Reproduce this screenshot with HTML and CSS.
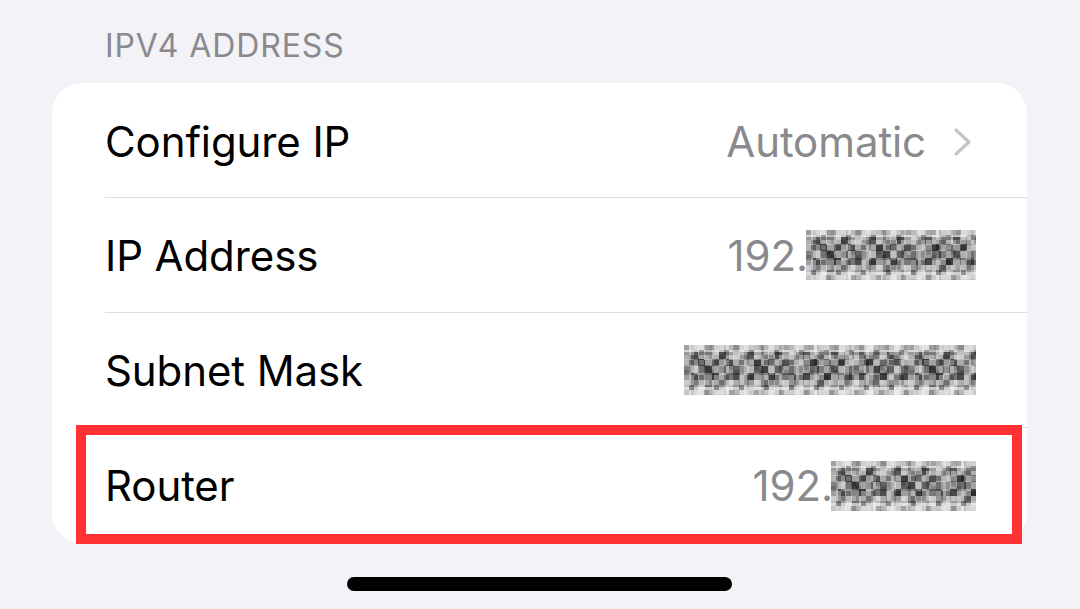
FILE: index.html
```html
<!DOCTYPE html>
<html lang="en">
<head>
<meta charset="utf-8">
<title>IPv4 Address</title>
<link rel="stylesheet" href="styles.css">
</head>
<body>
<svg class="defs" width="0" height="0" aria-hidden="true">
  <defs>
    <pattern id="mosaic" x="0" y="0" width="56" height="49" patternUnits="userSpaceOnUse">
      <rect x="0" y="0" width="56" height="49" fill="#bdbdbd"/>
      <rect x="0" y="0" width="7" height="7" fill="#d6d6d6"/>
      <rect x="7" y="0" width="7" height="7" fill="#c8c8c8"/>
      <rect x="14" y="0" width="7" height="7" fill="#e0e0e0"/>
      <rect x="21" y="0" width="7" height="7" fill="#b8b8b8"/>
      <rect x="28" y="0" width="7" height="7" fill="#d2d2d2"/>
      <rect x="35" y="0" width="7" height="7" fill="#c4c4c4"/>
      <rect x="42" y="0" width="7" height="7" fill="#dadada"/>
      <rect x="49" y="0" width="7" height="7" fill="#bababa"/>
      <rect x="0" y="7" width="7" height="7" fill="#9a9a9a"/>
      <rect x="7" y="7" width="7" height="7" fill="#5a5a5a"/>
      <rect x="14" y="7" width="7" height="7" fill="#a6a6a6"/>
      <rect x="21" y="7" width="7" height="7" fill="#7a7a7a"/>
      <rect x="28" y="7" width="7" height="7" fill="#b0b0b0"/>
      <rect x="35" y="7" width="7" height="7" fill="#4e4e4e"/>
      <rect x="42" y="7" width="7" height="7" fill="#9c9c9c"/>
      <rect x="49" y="7" width="7" height="7" fill="#c2c2c2"/>
      <rect x="0" y="14" width="7" height="7" fill="#b4b4b4"/>
      <rect x="7" y="14" width="7" height="7" fill="#8a8a8a"/>
      <rect x="14" y="14" width="7" height="7" fill="#3c3c3c"/>
      <rect x="21" y="14" width="7" height="7" fill="#a2a2a2"/>
      <rect x="28" y="14" width="7" height="7" fill="#6a6a6a"/>
      <rect x="35" y="14" width="7" height="7" fill="#989898"/>
      <rect x="42" y="14" width="7" height="7" fill="#505050"/>
      <rect x="49" y="14" width="7" height="7" fill="#ababab"/>
      <rect x="0" y="21" width="7" height="7" fill="#8e8e8e"/>
      <rect x="7" y="21" width="7" height="7" fill="#b6b6b6"/>
      <rect x="14" y="21" width="7" height="7" fill="#727272"/>
      <rect x="21" y="21" width="7" height="7" fill="#444444"/>
      <rect x="28" y="21" width="7" height="7" fill="#a4a4a4"/>
      <rect x="35" y="21" width="7" height="7" fill="#626262"/>
      <rect x="42" y="21" width="7" height="7" fill="#b2b2b2"/>
      <rect x="49" y="21" width="7" height="7" fill="#6e6e6e"/>
      <rect x="0" y="28" width="7" height="7" fill="#a0a0a0"/>
      <rect x="7" y="28" width="7" height="7" fill="#4a4a4a"/>
      <rect x="14" y="28" width="7" height="7" fill="#9e9e9e"/>
      <rect x="21" y="28" width="7" height="7" fill="#868686"/>
      <rect x="28" y="28" width="7" height="7" fill="#3e3e3e"/>
      <rect x="35" y="28" width="7" height="7" fill="#a8a8a8"/>
      <rect x="42" y="28" width="7" height="7" fill="#787878"/>
      <rect x="49" y="28" width="7" height="7" fill="#4c4c4c"/>
      <rect x="0" y="35" width="7" height="7" fill="#c0c0c0"/>
      <rect x="7" y="35" width="7" height="7" fill="#9a9a9a"/>
      <rect x="14" y="35" width="7" height="7" fill="#b8b8b8"/>
      <rect x="21" y="35" width="7" height="7" fill="#6c6c6c"/>
      <rect x="28" y="35" width="7" height="7" fill="#acacac"/>
      <rect x="35" y="35" width="7" height="7" fill="#8c8c8c"/>
      <rect x="42" y="35" width="7" height="7" fill="#bcbcbc"/>
      <rect x="49" y="35" width="7" height="7" fill="#969696"/>
      <rect x="0" y="42" width="7" height="7" fill="#dcdcdc"/>
      <rect x="7" y="42" width="7" height="7" fill="#cacaca"/>
      <rect x="14" y="42" width="7" height="7" fill="#e2e2e2"/>
      <rect x="21" y="42" width="7" height="7" fill="#c6c6c6"/>
      <rect x="28" y="42" width="7" height="7" fill="#d8d8d8"/>
      <rect x="35" y="42" width="7" height="7" fill="#cecece"/>
      <rect x="42" y="42" width="7" height="7" fill="#e4e4e4"/>
      <rect x="49" y="42" width="7" height="7" fill="#cccccc"/>
    </pattern>
    <pattern id="grain" x="0" y="0" width="25" height="25" patternUnits="userSpaceOnUse">
      <rect x="0" y="0" width="5" height="5" fill="#000" fill-opacity="0.25"/>
      <rect x="10" y="0" width="5" height="5" fill="#fff" fill-opacity="0.3"/>
      <rect x="20" y="0" width="5" height="5" fill="#000" fill-opacity="0.15"/>
      <rect x="5" y="5" width="5" height="5" fill="#fff" fill-opacity="0.35"/>
      <rect x="15" y="5" width="5" height="5" fill="#000" fill-opacity="0.3"/>
      <rect x="0" y="10" width="5" height="5" fill="#fff" fill-opacity="0.2"/>
      <rect x="10" y="10" width="5" height="5" fill="#000" fill-opacity="0.2"/>
      <rect x="20" y="10" width="5" height="5" fill="#fff" fill-opacity="0.4"/>
      <rect x="5" y="15" width="5" height="5" fill="#000" fill-opacity="0.35"/>
      <rect x="15" y="15" width="5" height="5" fill="#fff" fill-opacity="0.25"/>
      <rect x="0" y="20" width="5" height="5" fill="#000" fill-opacity="0.1"/>
      <rect x="10" y="20" width="5" height="5" fill="#fff" fill-opacity="0.3"/>
      <rect x="20" y="20" width="5" height="5" fill="#000" fill-opacity="0.28"/>
    </pattern>
  </defs>
</svg>

<main class="screen">
  <h2 class="section-header">IPV4 ADDRESS</h2>
  <section class="card">
    <div class="row">
      <span class="label">Configure IP</span>
      <span class="value">Automatic
        <svg class="chevron" width="19" height="30" viewBox="0 0 19 30" aria-hidden="true"><polyline points="3,3 16,15 3,27" fill="none" stroke="#c4c4c7" stroke-width="3.2" stroke-linecap="round" stroke-linejoin="round"/></svg>
      </span>
    </div>
    <div class="row">
      <span class="label">IP Address</span>
      <span class="value">192.<svg class="mosaic" width="170" height="50" aria-hidden="true"><rect width="170" height="50" fill="url(#mosaic)"/><rect width="170" height="50" fill="url(#grain)"/></svg></span>
    </div>
    <div class="row">
      <span class="label">Subnet Mask</span>
      <span class="value"><svg class="mosaic" width="292" height="50" aria-hidden="true"><rect width="292" height="50" fill="url(#mosaic)"/><rect width="292" height="50" fill="url(#grain)"/></svg></span>
    </div>
    <div class="row last">
      <span class="label">Router</span>
      <span class="value">192.<svg class="mosaic" width="145" height="50" aria-hidden="true"><rect width="145" height="50" fill="url(#mosaic)"/><rect width="145" height="50" fill="url(#grain)"/></svg></span>
    </div>
    <div class="highlight"></div>
  </section>
  <div class="home-indicator"></div>
</main>
</body>
</html>
```

FILE: styles.css
```css
* { box-sizing: border-box; }

html, body {
  margin: 0;
  padding: 0;
  background: #f2f2f7;
  width: 1080px;
  height: 609px;
  overflow: hidden;
}

.defs { position: absolute; width: 0; height: 0; }

.screen {
  display: flex;
  flex-direction: column;
  padding: 0 53px 0 52px;
  font-family: Inter, "Liberation Sans", Arial, sans-serif;
}

.section-header {
  margin: 0;
  padding: 27px 0 0 53px;
  height: 83px;
  font-size: 32px;
  font-weight: 400;
  line-height: 38px;
  letter-spacing: 0.9px;
  color: #8a8a8e;
}

.card {
  position: relative;
  background: #ffffff;
  border-radius: 30px;
  display: flex;
  flex-direction: column;
}

.row {
  height: 115px;
  margin-left: 53px;
  padding-right: 51px;
  display: flex;
  align-items: center;
  justify-content: space-between;
  border-bottom: 1.5px solid #dedee0;
  font-size: 42px;
  letter-spacing: -0.1px;
}

.row:first-child { padding-top: 3px; }

.row.last { border-bottom: none; }

.label { color: #000000; }

.value {
  display: flex;
  align-items: center;
  color: #8a8a8e;
}

.chevron {
  margin-left: 27px;
  margin-right: 4px;
}

.mosaic { display: block; margin-left: -2px; }

.highlight {
  position: absolute;
  left: 24px;
  top: 342px;
  width: 946px;
  height: 119px;
  border: 10px solid #fe3134;
}

.home-indicator {
  align-self: center;
  margin-top: 34px;
  width: 385px;
  height: 14px;
  border-radius: 7px;
  background: #000000;
}
```
